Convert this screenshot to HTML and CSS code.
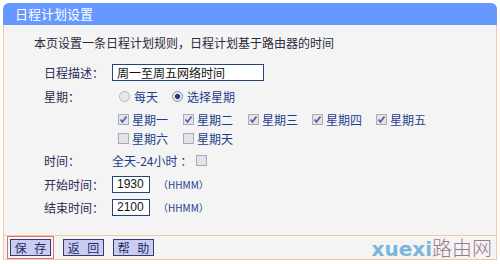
FILE: index.html
```html
<!DOCTYPE html>
<html lang="zh">
<head>
  <meta charset="UTF-8" />
  <title>日程计划设置</title>
  <link rel="stylesheet" href="styles.css">
</head>
<body>
  <div class="panel">
    <div class="panel-head">日程计划设置</div>
    <div class="panel-body">
      <p class="intro">本页设置一条日程计划规则，日程计划基于路由器的时间</p>

      <div class="row row-desc">
        <span class="label">日程描述：</span>
        <span class="field field-wide">周一至周五网络时间</span>
      </div>

      <div class="row row-week">
        <span class="label">星期：</span>
        <span class="radio"></span><span class="opt">每天</span>
        <span class="radio on"></span><span class="opt">选择星期</span>
      </div>

      <div class="days">
        <label class="day"><span class="cb on"><svg viewBox="0 0 11 11"><path d="M2.5 5.5 L4.5 8 L8.5 2.5" fill="none" stroke="#4a5aa0" stroke-width="1.6"/></svg></span>星期一</label>
        <label class="day"><span class="cb on"><svg viewBox="0 0 11 11"><path d="M2.5 5.5 L4.5 8 L8.5 2.5" fill="none" stroke="#4a5aa0" stroke-width="1.6"/></svg></span>星期二</label>
        <label class="day"><span class="cb on"><svg viewBox="0 0 11 11"><path d="M2.5 5.5 L4.5 8 L8.5 2.5" fill="none" stroke="#4a5aa0" stroke-width="1.6"/></svg></span>星期三</label>
        <label class="day"><span class="cb on"><svg viewBox="0 0 11 11"><path d="M2.5 5.5 L4.5 8 L8.5 2.5" fill="none" stroke="#4a5aa0" stroke-width="1.6"/></svg></span>星期四</label>
        <label class="day"><span class="cb on"><svg viewBox="0 0 11 11"><path d="M2.5 5.5 L4.5 8 L8.5 2.5" fill="none" stroke="#4a5aa0" stroke-width="1.6"/></svg></span>星期五</label>
        <label class="day"><span class="cb"></span>星期六</label>
        <label class="day"><span class="cb"></span>星期天</label>
      </div>

      <div class="row row-time">
        <span class="label">时间：</span>
        <span class="opt">全天-24小时 ：</span>
        <span class="cb"></span>
      </div>

      <div class="row row-time">
        <span class="label">开始时间：</span>
        <span class="field field-short">1930</span>
        <span class="hint">（HHMM）</span>
      </div>

      <div class="row row-end">
        <span class="label">结束时间：</span>
        <span class="field field-short">2100</span>
        <span class="hint">（HHMM）</span>
      </div>
    </div>
    <div class="panel-foot">
      <span class="focus"><button class="btn">保 存</button></span>
      <button class="btn">返 回</button>
      <button class="btn">帮 助</button>
      <span class="mark"><span class="mark-en">xuexi</span><span class="mark-cn">路由网</span></span>
    </div>
  </div>
</body>
</html>
```

FILE: styles.css
```css
body {
  margin: 0;
  background: #ffffff;
  font-family: "Noto Sans CJK SC", "Noto Sans", sans-serif;
  font-size: 12px;
  color: #2b2b4a;
}
.panel {
  margin: 3px 3px 0 3px;
  width: 494px;
}
.panel-head {
  height: 22px;
  line-height: 22px;
  background: #6699ff;
  color: #ffffff;
  font-size: 13px;
  padding-left: 12px;
  border-radius: 6px 6px 0 0;
}
.panel-body {
  background: #f4f4f4;
  border-left: 1px solid #f3c9a4;
  border-right: 1px solid #f3c9a4;
  height: 210px;
  padding-left: 30px;
}
.intro {
  margin: 0;
  padding-top: 10px;
  line-height: 16px;
  height: 16px;
  color: #2b2b3a;
}
.row {
  display: flex;
  align-items: center;
  height: 24px;
  padding-left: 10px;
}
.row-desc {
  margin-top: 9px;
}
.row-week {
  height: 25px;
}
.row-end {
  height: 22px;
}
.label {
  width: 68px;
  color: #2b2b55;
}
.field {
  background: #ffffff;
  border: 1px solid #27437d;
  height: 15px;
  line-height: 15px;
  padding-left: 4px;
  color: #111111;
  box-sizing: content-box;
}
.field-wide {
  width: 146px;
}
.field-short {
  width: 32px;
  font-family: "Liberation Sans", sans-serif;
}
.hint {
  margin-left: 8px;
  color: #1d3e8d;
  font-size: 10px;
}
.opt {
  color: #1d3e8d;
}
.radio {
  width: 11px;
  height: 11px;
  border-radius: 50%;
  border: 1px solid #b0b4c4;
  background: #e6e8ee;
  margin: 0 4px 0 7px;
  box-sizing: border-box;
}
.radio.on {
  margin-left: 14px;
  border-color: #8c94b0;
  background: radial-gradient(circle, #2c3c7c 0 2.4px, #dfe2ec 2.8px);
}
.days {
  display: grid;
  grid-template-columns: 65px 65px 64px 64px 64px;
  grid-auto-rows: 19px;
  padding-left: 84px;
  padding-top: 1px;
}
.day {
  display: flex;
  align-items: center;
  color: #1d3e8d;
}
.cb {
  display: inline-flex;
  width: 11px;
  height: 11px;
  border: 1px solid #a8acb8;
  background: #e4e4e8;
  margin-right: 3px;
  box-sizing: border-box;
}
.cb svg {
  width: 11px;
  height: 11px;
  margin: -1px;
}
.row-time .cb {
  margin-left: 4px;
}
.panel-foot {
  position: relative;
  display: flex;
  align-items: center;
  gap: 9px;
  height: 23px;
  background: #f4f4f4;
  border: 1px solid #f3c9a4;
  padding-left: 3px;
}
.focus {
  display: flex;
  padding: 2px 2px;
  border: 1px solid #e07070;
}
.btn {
  font-family: "Noto Sans CJK SC", sans-serif;
  font-size: 12px;
  line-height: 14px;
  height: 17px;
  width: 41px;
  padding: 0;
  white-space: pre;
  word-spacing: 5px;
  background: #c9cdf2;
  border: 1px solid #3a3a66;
  color: #1f2a6a;
}
.mark {
  position: absolute;
  right: 4px;
  bottom: -2px;
  font-size: 20px;
  line-height: 24px;
  white-space: nowrap;
}
.mark-en {
  font-family: "DejaVu Sans", sans-serif;
  font-weight: bold;
  font-size: 20px;
  color: #79b6d8;
}
.mark-cn {
  font-size: 20px;
  color: #9a7a8e;
  font-weight: 300;
}
```
